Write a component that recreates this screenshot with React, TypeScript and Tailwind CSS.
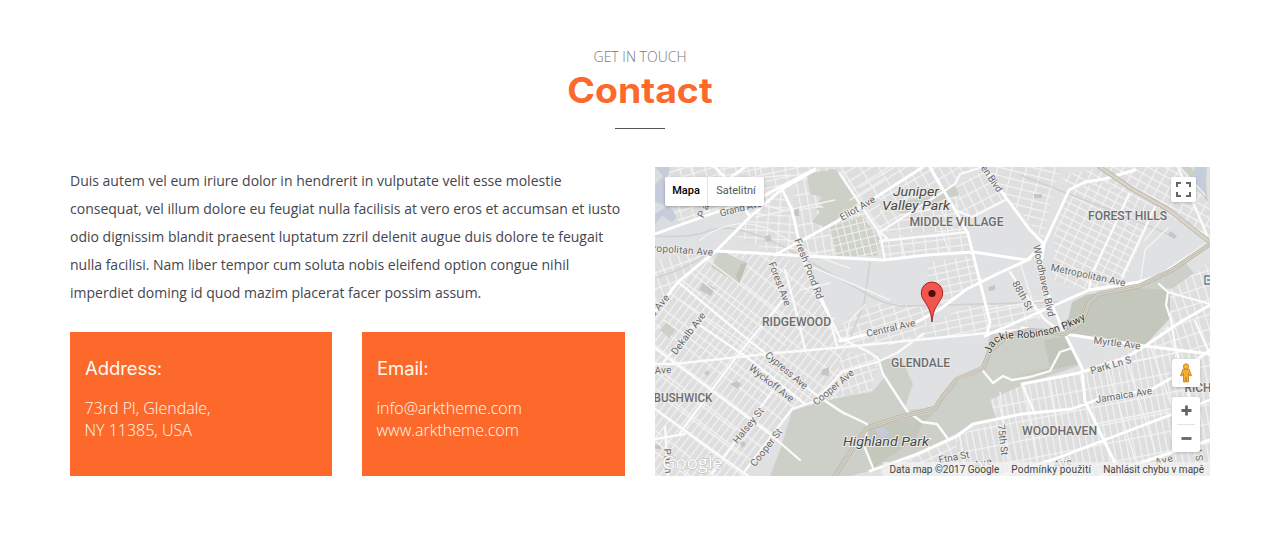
import React from 'react';

const grids: { id: string; w: number; h: number; r: number; pts: string }[] = [
  { id: 'a', w: 6.5, h: 17, r: 37, pts: '655,318 678,282 717,251 775,254 800,265 828,315 850,345 850,395 792,409 745,476 655,476' },
  { id: 'b', w: 8, h: 15, r: -10, pts: '792,210 798,170 840,167 880,234 868,256 800,256' },
  { id: 'c', w: 12, h: 7, r: -12, pts: '715,167 815,167 782,189 750,217' },
  { id: 'c2', w: 11, h: 8, r: 4, pts: '752,217 782,189 798,237 803,256 775,254 735,235' },
  { id: 'd', w: 16, h: 9, r: -32, pts: '840,167 922,167 880,190 880,232 856,196' },
  { id: 'e', w: 12, h: 8, r: -7, pts: '882,242 968,234 974,252 927,255 885,260' },
  { id: 'f', w: 12, h: 8, r: -7, pts: '880,232 955,184 968,232' },
  { id: 'f2', w: 9, h: 12, r: -30, pts: '922,167 983,167 960,174 955,184 935,200 905,215 880,232 880,192' },
  { id: 'g', w: 14, h: 8, r: 14, pts: '983,167 1060,167 1050,205 1044,240 1022,213 1000,193' },
  { id: 'g2', w: 9, h: 12, r: -27, pts: '955,186 983,170 1006,198 972,216 962,222' },
  { id: 'h', w: 11, h: 7, r: -12, pts: '927,262 975,255 982,280 970,290 935,310 928,300' },
  { id: 'i', w: 13, h: 7, r: -12, pts: '932,322 968,306 1040,304 1048,310 1040,320 985,333 900,342 923,334' },
  { id: 'i2', w: 13, h: 7, r: -18, pts: '835,335 850,315 880,303 932,306 925,330 897,345 840,346' },
  { id: 'j', w: 10, h: 7, r: 26, pts: '1069,190 1104,179 1155,207 1125,280 1088,290 1053,280 1055,230' },
  { id: 'k', w: 10, h: 8, r: 28, pts: '1100,167 1180,167 1210,205 1210,244' },
  { id: 'k2', w: 9, h: 9, r: 28, pts: '1060,175 1100,169 1165,215 1160,222 1104,182 1072,190' },
  { id: 'm', w: 6.5, h: 19, r: -11, pts: '957,436 997,420 990,400 1023,385 1080,372 1145,346 1182,321 1210,325 1210,476 950,476' },
  { id: 'n', w: 8, h: 14, r: -18, pts: '1170,290 1210,262 1210,352 1145,346 1170,322' },
  { id: 'o', w: 8, h: 9, r: -18, pts: '840,355 880,352 877,366 872,390 845,396 838,385' },
  { id: 'p', w: 10, h: 8, r: -25, pts: '870,472 917,454 957,436 957,476' },
  { id: 'q', w: 12, h: 8, r: -17, pts: '670,167 715,167 727,180 745,210 708,215 680,224 665,195' },
  { id: 's', w: 9, h: 15, r: -20, pts: '655,260 710,250 672,288 655,310' },
];

const parks = [
  '877,358 902,360 913,384 905,407 888,384',
  '792,411 820,402 842,397 872,392 884,378 905,410 935,408 950,386 983,369 990,334 1040,328 1065,334 1078,366 1023,385 990,400 997,419 973,424 948,438 917,454 870,471 850,476 770,476 780,450',
  '1072,310 1086,295 1139,285 1170,271 1185,262 1196,276 1186,293 1168,288 1162,294 1172,300 1166,322 1145,345 1100,338 1065,334',
  '1167,167 1190,167 1206,182 1210,230 1175,188',
];

const upperParks = [
  '720,250 747,263 739,284 711,267',
  '898,212 908,200 930,196 945,188 955,184 959,195 935,202 905,215',
  '807,174 835,169 848,186 858,203 845,212 828,228 812,222 820,212 815,208 825,208 818,203 822,197 810,194',
  '660,330 667,322 676,330 669,338',
];

const local = [
  'M690,167L710,215M755,167L760,215M730,180L790,175M746,200L782,210M756,217L835,200M700,240Q740,210 780,235T850,268',
  'M680,300L770,360M664,320L770,397M655,372L735,430M655,392L740,455M690,272L785,345M705,258L800,330M655,440L690,476',
  'M860,187L895,167M850,200L885,178M900,235L905,258M940,225L950,255M900,215L940,208L953,230',
  'M1020,262L1035,310M1145,240L1165,215M1140,285L1145,250L1168,228M1180,167L1205,195',
  'M1105,360L1135,460M1125,356L1155,450M1150,345L1180,430M1095,370L1180,352M1000,392L1010,476M1025,384L1040,476M1050,380L1065,476M960,436L965,476M1090,425L1190,405',
  'M805,264L890,300M800,290L830,283M810,325L835,318M845,347L850,320L865,305M985,310L1045,300',
];

const mid = [
  'M655,348L770,434L800,460',
  'M655,409L748,476',
  'M698,324L748,358L805,404',
  'M678,282L725,321L765,353L815,394L845,414',
  'M782,301L737,356L680,433',
  'M775,388L727,453L712,474',
  'M698,321L662,364',
  'M655,364L675,364L765,354L845,347L987,333L1030,329',
  'M665,427L668,476M655,439L685,434',
  'M815,290L828,313L840,338L867,351L878,358L883,374L907,411L922,422L937,424L948,439',
  'M785,270L797,315L805,349M828,313L837,346',
  'M815,394L840,411L867,424L865,448L873,468',
  'M877,362L842,372L815,401L792,409L745,471',
  'M923,334L897,353L877,362',
  'M983,371L993,383L1003,376L1012,380L1030,377L1050,371L1060,352L1072,348',
  'M880,232L955,184L960,174L983,167',
  'M880,241L968,232M880,232L887,238L882,242M972,217L1007,199M955,210L972,217',
  'M840,174L880,234L885,260',
  'M1089,290L1091,277L1129,194M1122,277L1155,207',
  'M1010,272L1022,290L1045,320L1065,334',
  'M1159,284L1168,292L1185,297L1210,304M1168,292L1166,305L1171,320L1175,345L1190,400',
  'M1022,384L1034,412M1195,321L1208,350M1178,167L1207,235M1104,167L1112,177',
];

const main = [
  'M655,234L708,215L765,195L815,169',
  'M655,312L678,282L717,250L750,217L782,189L815,170',
  'M717,251L845,258L883,260L927,255L973,252L1027,260L1044,244',
  'M782,189L792,210L798,237L805,264L828,313',
  'M775,255L845,217L923,167',
  'M715,167L727,180L750,217M745,167L727,180',
  'M930,167L955,210L968,234L973,254L990,322L987,333',
  'M983,167L1007,199L1030,230L1044,244L1040,270L1052,305L1065,334L1082,368L1085,401L1109,451L1122,476',
  'M1030,259L997,274L967,289L940,309L917,322L840,341',
  'M1044,244L1069,190L1085,182L1104,179L1135,170',
  'M985,336L1035,314L1089,290L1139,282L1159,276L1210,242',
  'M1022,328L1065,334L1145,346L1210,354',
  'M1022,384L1079,373L1125,358L1145,346L1182,321L1210,305',
  'M1022,414L1072,409L1099,399L1152,389L1175,376L1210,350',
  'M1000,476L1055,459L1115,436L1210,400M1100,476L1210,440',
  'M870,471L917,454L957,436L973,424L1022,414',
];

const tan = [
  'M1100,167L1132,189L1169,210L1207,240',
  'M1210,244L1172,270L1139,286L1099,294L1089,303L1082,322L1065,334L1030,330L1008,335L990,351L983,368L957,379L943,396L935,408L900,417L867,428L855,445L835,476',
];

// x, y (text centre), angle, drawn length, text
const streets: [number, number, number, number, string][] = [
  [741, 209, -14, 43, 'Grand Ave'],
  [704, 211, -65, 14, 'Pa'],
  [683, 251, 4, 60, 'ropolitan Ave'],
  [858, 209, -30, 39, 'Eliot Ave'],
  [808, 269, 69, 64, 'Fresh Pond Rd'],
  [779, 284, 69, 46, 'Forest Ave'],
  [689, 334, -53, 50, 'Dekalb Ave'],
  [660, 306, -50, 25, 's Ave'],
  [663, 371, -3, 17, 'Ave'],
  [786, 371, 40, 52, 'Cypress Ave'],
  [771, 384, 38, 54, 'Wyckoff Ave'],
  [834, 388, -40, 50, 'Cooper Ave'],
  [749, 426, -51, 43, 'Halsey St'],
  [767, 448, -52, 45, 'Cooper St'],
  [891, 329, -13, 50, 'Central Ave'],
  [991, 179, 56, 30, 'en Blvd'],
  [1022, 296, 61, 32, '88th St'],
  [1043, 281, 78, 73, 'Woodhaven Blvd'],
  [1088, 276, 12, 76, 'Metropolitan Ave'],
  [1117, 344, 7, 47, 'Myrtle Ave'],
  [1111, 366, -16, 42, 'Park Ln S'],
  [1124, 396, -9, 57, 'Jamaica Ave'],
  [1002, 440, 83, 31, '75th St'],
  [954, 458, -10, 31, 'Etna St'],
  [983, 464, -13, 18, 'Ave'],
  [1063, 464, -10, 18, 'Ave'],
  [1164, 461, -15, 18, 'Ave'],
  [667, 461, 87, 25, 'Pal n'],
  [1200, 455, -98, 12, 'St'],
];

const areas: [number, number, number, string][] = [
  [956.5, 225.5, 94, 'MIDDLE VILLAGE'],
  [1127.5, 219.5, 79, 'FOREST HILLS'],
  [796.5, 325.5, 69, 'RIDGEWOOD'],
  [920.5, 366.5, 59, 'GLENDALE'],
  [683, 401.5, 59, 'BUSHWICK'],
  [1059.5, 434.5, 75, 'WOODHAVEN'],
  [1198, 391.5, 27, 'RICH'],
];

const Lines = ({ d, c, w }: { d: string[]; c: string; w: number }) => (
  <path d={d.join('')} fill="none" stroke={c} strokeWidth={w} strokeLinejoin="round" strokeLinecap="round" />
);

function StreetMap() {
  return (
    <svg viewBox="655 167 555 309" className="block h-full w-full" fontFamily="Roboto, sans-serif">
      <defs>
        {grids.map((g) => (
          <pattern key={g.id} id={`grid-${g.id}`} width={g.w} height={g.h} patternUnits="userSpaceOnUse" patternTransform={`rotate(${g.r})`}>
            <rect width={g.w} height={g.h} fill="#dedede" />
            <path d={`M0,0H${g.w}M0,0V${g.h}`} stroke="#f3f3f3" strokeWidth="2.4" />
          </pattern>
        ))}
        <pattern id="cemetery" width="7" height="8" patternUnits="userSpaceOnUse" patternTransform="rotate(-14)">
          <rect width="7" height="8" fill="#cfd2ca" />
          <path d="M0,0H7M0,0V8" stroke="#f0f1ec" strokeWidth="2" />
        </pattern>
        <path id="pkwy" d="M991,354C993,341 1004,338 1020,338C1042,338 1064,332 1090,317" />
      </defs>
      <rect x="655" y="167" width="555" height="309" fill="#e0e1e2" />
      <path d="M655,167H675L680,200L708,215L655,234Z" fill="#dadde0" />
      <path d="M655,167H676L672,173L664,178L667,205L678,216L672,222L662,216L655,224V214L668,206L655,202V185L663,176Z" fill="#c6ccda" />
      {parks.map((p) => (
        <polygon key={p} points={p} fill="#cdd0c8" />
      ))}
      <polygon points="1072,302 1086,295 1139,288 1168,290 1172,300 1170,318 1145,345 1100,338 1065,334" fill="#c3c7bc" />
      <polygon points="1044,340 1064,336 1078,364 1003,380 1050,368" fill="#c2c6ba" />
      <polygon points="867,428 935,412 922,424 915,440 873,468 865,450" fill="#c4c8bc" />
      <path d="M875,430l8,-3 6,6 -7,5z M1195,167h12l-2,28l-12,-12z" fill="#c5ccdc" />
      {grids.map((g) => (
        <polygon key={g.id} points={g.pts} fill={`url(#grid-${g.id})`} />
      ))}
      <polygon points="828,228 862,216 881,240 877,256 836,256" fill="url(#cemetery)" />
      {upperParks.map((p) => (
        <polygon key={p} points={p} fill="#cdd0c7" />
      ))}
      <polygon points="739,284 747,263 741,264 736,276" fill="#bfc2b6" />
      <path
        d="M655,236Q690,238 705,232T735,229T765,238T810,262L860,290Q885,306 905,306L1060,302M655,278Q690,268 712,250M870,262L864,304L850,338M1020,175L1110,210L1170,235"
        fill="none"
        stroke="#d0d1d1"
        strokeWidth="1.6"
      />
      <path
        d="M794,208h5v8h-5zM765,236l5,-1 2,6 -6,1zM703,282l12,6 -4,8 -12,-6zM704,373l3,-3 3,3 -3,3zM730,384l7,-3 4,3 -3,5zM740,443l4,-2 2,4 -4,3zM822,370l7,-3v9l-8,-1zM988,287l7,-2v5l-6,1zM1034,194h8v4h-8zM1170,231l7,5 -3,3 -6,-4zM655,445h6v4h-6z"
        fill="#c6c6c6"
      />
      <Lines d={local} c="#f3f3f3" w={1.4} />
      <Lines d={mid} c="#fbfbfb" w={2.3} />
      <Lines d={main} c="#ffffff" w={2.9} />
      <Lines d={tan} c="#bab4a8" w={4.6} />
      <Lines d={tan} c="#d9d4c9" w={3} />
      <path d={tan[1]} fill="none" stroke="#b9b3a8" strokeWidth="0.8" />

      <g fill="#686868" stroke="#efefef" strokeWidth="1.8" paintOrder="stroke" textAnchor="middle" fontSize="10">
        {streets.map(([x, y, r, len, t], i) => (
          <text key={i} transform={`translate(${x} ${y}) rotate(${r})`} textLength={len} y="2.5">
            {t}
          </text>
        ))}
      </g>
      <text fontSize="10.5" fill="#383838" stroke="#e5e5df" strokeWidth="1.6" paintOrder="stroke">
        <textPath href="#pkwy" textLength="106">Jackie Robinson Pkwy</textPath>
      </text>
      <g fontSize="12" fill="#6c6c6c" stroke="#ececec" strokeWidth="1.6" paintOrder="stroke" textAnchor="middle" fontWeight="500">
        {areas.map(([x, y, len, t]) => (
          <text key={t} x={x} y={y} textLength={len} lengthAdjust="spacingAndGlyphs">
            {t}
          </text>
        ))}
      </g>
      <g fontSize="13.5" fontStyle="italic" fill="#484848" stroke="#eeeeea" strokeWidth="1.8" paintOrder="stroke" textAnchor="middle">
        <text x="916" y="196" textLength="46" lengthAdjust="spacingAndGlyphs">Juniper</text>
        <text x="916" y="210" textLength="68" lengthAdjust="spacingAndGlyphs">Valley Park</text>
        <text x="886" y="446" textLength="86" lengthAdjust="spacingAndGlyphs">Highland Park</text>
      </g>
      <path d="M1205,276h6v8h-6zM1207,280h3" fill="#e8eef0" stroke="#5f7e8f" strokeWidth="1.3" />

      <path
        d="M932,322C931.200,313 929,308 925,302C922.500,298.500 921.300,296.200 921.300,292.700A10.700,10.700 0 0 1 942.700,292.700C942.700,296.200 941.500,298.500 939,302C935,308 932.800,313 932,322Z"
        fill="#f2544e"
        stroke="#a82420"
        strokeWidth="1"
      />
      <circle cx="932" cy="293.500" r="3.600" fill="#4b0f0d" />
      <text x="662" y="469" fontFamily="Open Sans, sans-serif" fontSize="19" fontWeight="500" textLength="61" lengthAdjust="spacingAndGlyphs" fill="#fff" stroke="#b4b4b4" strokeWidth="1" paintOrder="stroke">
        Google
      </text>
    </svg>
  );
}

function ContactCard({ title, lines }: { title: string; lines: string[] }) {
  return (
    <div className="h-36 bg-[#fc692b] px-[14.5px] pt-[25px] text-[#fffaf0]">
      <h3 className="mb-[16px] w-fit origin-left scale-x-[1.03] font-['Inter',sans-serif] text-[18px] leading-6 font-normal tracking-[-0.1px]">{title}</h3>
      {lines.map((l) => (
        <p key={l} className="text-[16px] leading-[22px] font-light whitespace-nowrap">
          {l}
        </p>
      ))}
    </div>
  );
}

const copy = [
  'Duis autem vel eum iriure dolor in hendrerit in vulputate velit esse molestie',
  'consequat, vel illum dolore eu feugiat nulla facilisis at vero eros et accumsan et iusto',
  'odio dignissim blandit praesent luptatum zzril delenit augue duis dolore te feugait',
  'nulla facilisi. Nam liber tempor cum soluta nobis eleifend option congue nihil',
  'imperdiet doming id quod mazim placerat facer possim assum.',
];

export default function App() {
  return (
    <main className="h-[544px] overflow-hidden bg-white font-['Open_Sans',sans-serif]">
      <header className="flex flex-col items-center pt-[46px]">
        <p className="text-[14px] leading-[22px] font-light text-[#777]">GET IN TOUCH</p>
        <h2 className="mt-[3px] mr-[1px] scale-x-[1.07] font-['Inter',sans-serif] text-[35px] leading-[38px] font-bold text-[#fc692b]">Contact</h2>
        <div className="mt-[19px] h-px w-[50px] bg-[#555]" />
      </header>

      <section className="mx-auto mt-[38px] flex w-[1140px] gap-[30px]">
        <div className="w-[555px]">
          <div className="text-[14px] leading-7 font-normal text-[#45454d]">
            {copy.map((l) => (
              <p key={l} className="whitespace-nowrap">
                {l}
              </p>
            ))}
          </div>
          <div className="mt-[25px] grid grid-cols-[262px_263px] gap-[30px]">
            <ContactCard title="Address:" lines={['73rd Pl, Glendale,', 'NY 11385, USA']} />
            <ContactCard title="Email:" lines={['info@arktheme.com', 'www.arktheme.com']} />
          </div>
        </div>

        <div className="relative h-[309px] w-[555px] overflow-hidden font-['Roboto',sans-serif]">
          <StreetMap />
          <div className="absolute top-[10px] left-[10px] flex h-[29px] items-center rounded-[2px] bg-white text-[11px] shadow-[0_1px_3px_rgba(0,0,0,0.3)]">
            <button className="h-full w-[43px] border-r border-[#e4e4e4] font-medium text-black">Mapa</button>
            <button className="h-full w-14 text-[#565656]">Satelitní</button>
          </div>
          <button className="absolute top-[10px] left-[516px] flex h-[25px] w-[25px] items-center justify-center rounded-[2px] bg-white shadow-[0_1px_3px_rgba(0,0,0,0.2)]">
            <svg viewBox="0 0 15 15" className="h-[15px] w-[15px]">
              <path d="M1,5V1H5M10,1H14V5M14,10V14H10M5,14H1V10" fill="none" stroke="#666" strokeWidth="2" />
            </svg>
          </button>
          <button className="absolute top-[192px] left-[517px] flex h-7 w-7 items-center justify-center rounded-[2px] bg-white shadow-[0_1px_3px_rgba(0,0,0,0.2)]">
            <svg viewBox="0 0 14 20" className="h-5 w-3.5">
              <path d="M4,6H10L12.500,12.500L11,13L9.500,10.500V19H7.500L7,14L6.500,19H4.500V10.500L3,13L1.500,12.500Z" fill="#f4ab32" stroke="#c27b17" strokeWidth="0.8" />
              <circle cx="7" cy="3.500" r="2.700" fill="#f8b73d" stroke="#c27b17" strokeWidth="0.8" />
            </svg>
          </button>
          <div className="absolute top-[230px] left-[517px] flex h-[55px] w-7 flex-col items-center rounded-[2px] bg-white shadow-[0_1px_3px_rgba(0,0,0,0.2)]">
            <button className="flex h-[27px] w-full items-center justify-center">
              <svg viewBox="0 0 11 11" className="h-[11px] w-[11px]">
                <path d="M5.500,0.500V10.500M0.500,5.500H10.500" stroke="#666" strokeWidth="2.800" />
              </svg>
            </button>
            <div className="h-px w-[18px] bg-[#e2e2e2]" />
            <button className="flex h-[27px] w-full items-center justify-center">
              <svg viewBox="0 0 11 11" className="h-[11px] w-[11px]">
                <path d="M0.500,5.500H10.500" stroke="#666" strokeWidth="2.800" />
              </svg>
            </button>
          </div>
          <div className="absolute right-0 bottom-0 flex h-[14px] items-center gap-[12px] bg-[#f2f2f2]/75 pr-[6px] pl-[6px] text-[10px] whitespace-nowrap text-[#444]">
            <span>Data map ©2017 Google</span>
            <span className="tracking-[0.2px]">Podmínky použití</span>
            <span>Nahlásit chybu v mapě</span>
          </div>
        </div>
      </section>
    </main>
  );
}
